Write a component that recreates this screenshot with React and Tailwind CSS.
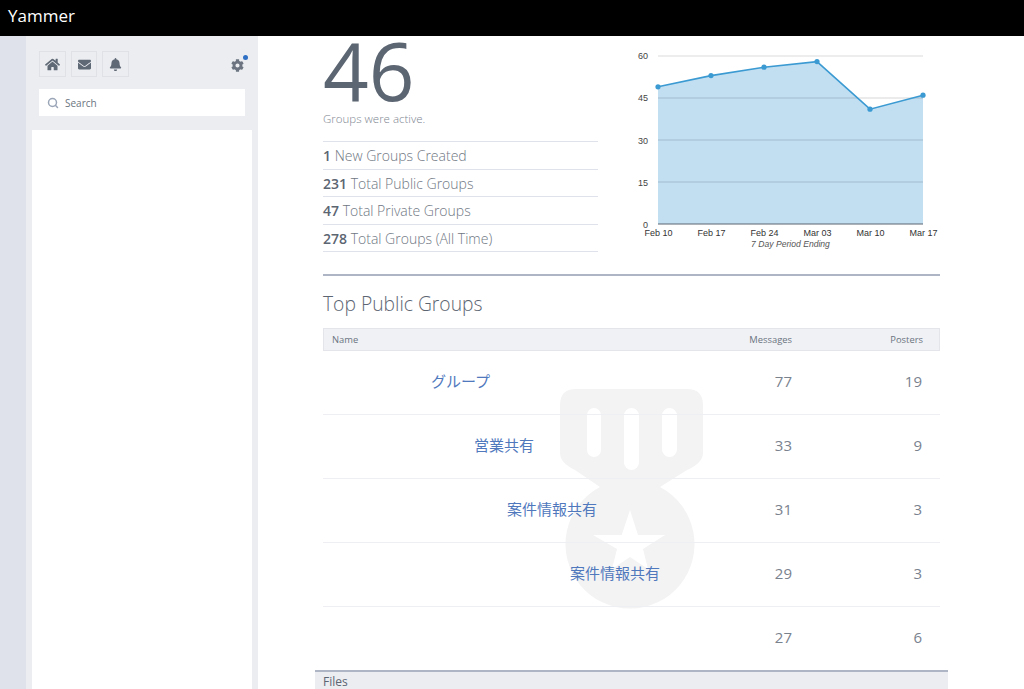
import { FaHome, FaEnvelope, FaBell, FaCog } from "react-icons/fa";
import { Search } from "lucide-react";

const stats = [
  ["1", "New Groups Created"],
  ["231", "Total Public Groups"],
  ["47", "Total Private Groups"],
  ["278", "Total Groups (All Time)"],
];

const rows = [
  { name: "グループ", pad: "pl-[108px]", messages: 77, posters: 19 },
  { name: "営業共有", pad: "pl-[151px]", messages: 33, posters: 9 },
  { name: "案件情報共有", pad: "pl-[184px]", messages: 31, posters: 3 },
  { name: "案件情報共有", pad: "pl-[247px]", messages: 29, posters: 3 },
  { name: "", pad: "", messages: 27, posters: 6 },
];

const points = [
  [658, 49],
  [711, 53],
  [764, 56],
  [817, 58],
  [870, 41],
  [923, 46],
].map(([x, v]) => [x - 620, 224 - 2.8 * v - 40]);

function Chart() {
  const line = points.map((p) => p.join(",")).join(" ");
  return (
    <svg width="330" height="220" viewBox="0 0 330 220" className="block">
      <polygon points={`38,184 ${line} 303,184`} fill="#c2dff2" />
      <line x1="38" x2="303" y1="16" y2="16" stroke="#000" strokeOpacity="0.14" />
      {[58, 100, 142].map((y) => (
        <line key={y} x1="38" x2="303" y1={y} y2={y} stroke="#000" strokeOpacity="0.16" />
      ))}
      <line x1="38" x2="303" y1="184" y2="184" stroke="#5b6470" />
      <polyline points={line} fill="none" stroke="#3b9ad2" strokeWidth="1.6" />
      {points.map(([x, y]) => (
        <circle key={x} cx={x} cy={y} r="2.6" fill="#3b9ad2" />
      ))}
      <g fontFamily="Liberation Sans, sans-serif" fontSize="9" fill="#444">
        {[
          ["60", 19],
          ["45", 61],
          ["30", 104],
          ["15", 146],
          ["0", 188],
        ].map(([t, y]) => (
          <text key={t} x="28" y={y} textAnchor="end">
            {t}
          </text>
        ))}
      </g>
      <g fontFamily="Liberation Sans, sans-serif" fontSize="9" fill="#333" textAnchor="middle">
        {["Feb 10", "Feb 17", "Feb 24", "Mar 03", "Mar 10", "Mar 17"].map((t, i) => (
          <text key={t} x={38.5 + i * 53} y="196">
            {t}
          </text>
        ))}
      </g>
      <text
        x="170.5"
        y="207"
        fontFamily="Liberation Sans, sans-serif"
        fontSize="8.6"
        fontStyle="italic"
        fill="#555"
        textAnchor="middle"
      >
        7 Day Period Ending
      </text>
    </svg>
  );
}

function Medal() {
  return (
    <svg width="143" height="220" viewBox="0 0 143 220" className="absolute left-[302px] top-[353px]">
      <path
        fillRule="evenodd"
        fill="#f3f3f3"
        d="M16 0H127Q143 0 143 16V64Q143 74 127 81L100 98A64.500 64.500 0 1 1 40 98L15 81Q0 74 0 64V16Q0 0 16 0Z
           M34 19A7 7 0 0 0 27 26V61A7 7 0 0 0 41 61V26A7 7 0 0 0 34 19Z
           M71.500 19A7.500 7.500 0 0 0 64 26.500V73.500A7.500 7.500 0 0 0 79 73.500V26.500A7.500 7.500 0 0 0 71.500 19Z
           M109.500 19A7.500 7.500 0 0 0 102 26.500V60.500A7.500 7.500 0 0 0 117 60.500V26.500A7.500 7.500 0 0 0 109.500 19Z
           M70 121L61.700 146H33L57 160L52 180L70 168L88 180L83 160L105 146H78Z"
      />
    </svg>
  );
}

export default function App() {
  return (
    <div className="h-[689px] w-[1024px] flex flex-col overflow-hidden bg-white font-['Open_Sans',sans-serif]">
      <header className="h-9 shrink-0 bg-black px-2 text-white text-[17px] leading-[31px]">Yammer</header>
      <div className="flex flex-1 min-h-0">
        <div className="w-[26px] shrink-0 bg-[#dfe2ea]" />
        <aside className="w-[232px] shrink-0 bg-[#ebedf1] flex flex-col px-1.5 pt-[15px]">
          <div className="flex items-center justify-between pl-[7px] pr-[8px] h-[26px]">
            <div className="flex gap-[5px]">
              <div className="w-[27px] h-[26px] border border-[#dfe1e6] flex items-center justify-center text-[#5f6875]">
                <FaHome size={15} />
              </div>
              <div className="w-[26px] h-[26px] border border-[#dfe1e6] flex items-center justify-center text-[#5f6875]">
                <FaEnvelope size={13} />
              </div>
              <div className="w-[27px] h-[26px] border border-[#dfe1e6] flex items-center justify-center text-[#5f6875]">
                <FaBell size={13} />
              </div>
            </div>
            <div className="relative mt-[3px] text-[#6b7480]">
              <FaCog size={13} />
              <span className="absolute -top-[4px] -right-[4px] w-[5px] h-[5px] rounded-full bg-[#2f6fc4]" />
            </div>
          </div>
          <div className="mt-3 ml-[7px] w-[206px] h-[27px] bg-white flex items-center pl-2 gap-[6px] text-[10px] text-[#6b7480]">
            <Search size={12} strokeWidth={3} className="text-[#9aa5b8]" />
            <span className="mt-[1px]">Search</span>
          </div>
          <div className="mt-3.5 flex-1 bg-white" />
        </aside>
        <main className="flex-1 min-w-0 flex flex-col">
          <div className="relative flex-1 min-h-0 overflow-hidden pl-[65px] w-[682px]">
            <Medal />
            <div className="relative flex h-[238px]">
              <div className="w-[275px] shrink-0">
                <div className="text-[80px] font-normal leading-[67px] text-[#5c6572]">46</div>
                <div className="mt-2 text-[11.500px] font-light text-[#7d8590] leading-[16px]">Groups were active.</div>
                <div className="mt-[14px] border-t border-[#dfe2ea]">
                  {stats.map(([n, label]) => (
                    <div
                      key={n}
                      className="h-[27.500px] border-b border-[#dfe2ea] text-sm font-light text-[#6f7783] leading-[27px]"
                    >
                      <span className="font-semibold text-[#5c6572]">{n}</span> {label}
                    </div>
                  ))}
                </div>
              </div>
              <div className="ml-[22px]">
                <div className="mt-1">
                  <Chart />
                </div>
              </div>
            </div>
            <div className="relative border-t-2 border-[#aeb6c6]">
              <h2 className="mt-[13px] text-[19.300px] font-light text-[#5c6572] leading-[30px]">Top Public Groups</h2>
              <div className="mt-[9px] h-[23px] pt-[1px] border border-[#e3e5ea] bg-[#f0f1f5] flex items-center text-[9.400px] text-[#6b7480]">
                <div className="flex-1 pl-2">Name</div>
                <div className="w-[100px] text-right">Messages</div>
                <div className="w-[147px] text-right pr-[16px]">Posters</div>
              </div>
              {rows.map((r, i) => (
                <div
                  key={i}
                  className="h-16 pb-[3px] border-b border-[#eeeff2] last:border-b-0 flex items-center text-[15px] text-[#7a828e]"
                >
                  <div className={`flex-1 text-[#4f78bd] font-normal font-['Noto_Sans_CJK_JP',sans-serif] ${r.pad}`}>
                    {r.name}
                  </div>
                  <div className="w-[100px] text-right">{r.messages}</div>
                  <div className="w-[148px] text-right pr-[18px]">{r.posters}</div>
                </div>
              ))}
            </div>
          </div>
          <div className="ml-[57px] w-[633px] h-[19px] shrink-0 border-t-2 border-[#aeb6c6] bg-[#ebedf1] pl-2 text-xs text-[#5c6572] leading-[20px]">
            Files
          </div>
        </main>
      </div>
    </div>
  );
}
